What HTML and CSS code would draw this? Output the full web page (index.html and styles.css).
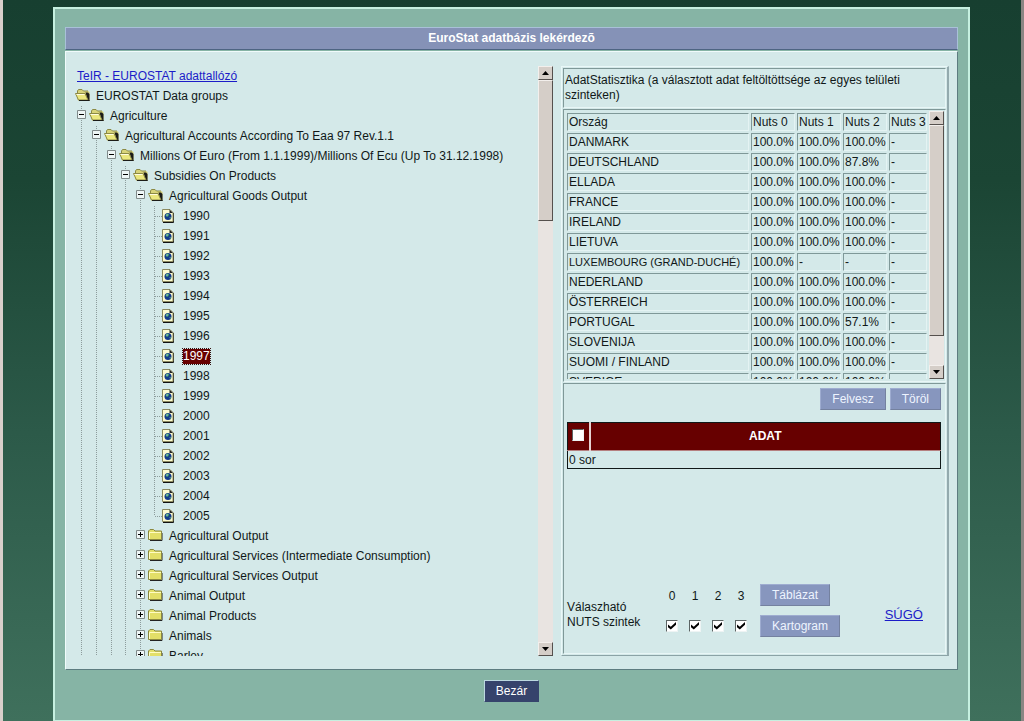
FILE: index.html
```html
<!DOCTYPE html>
<html lang="hu">
<head>
<meta charset="utf-8">
<title>EuroStat adatbázis lekérdezõ</title>
<link rel="stylesheet" href="styles.css">
</head>
<body>
<svg class="sprite" aria-hidden="true">
  <symbol id="open" viewBox="0 0 15 12">
    <path d="M2 10V2l1.500-1.500h3.500L8.500 2H13l1.500 1v9H4z" fill="#d8d47a"/>
    <path d="M2.500 4V2l1-1.500h3.500L8.500 2H13" fill="none" stroke="#8b8945"/>
    <path d="M10.500 3.500H13L14.500 5v7H13z" fill="#1c1c18"/>
    <path d="M.500 4.500H10L13 11H3.500z" fill="#ece87e" stroke="#8b8945"/>
    <path d="M1.500 5.500h8" stroke="#fffde0"/>
    <path d="M4 11.500h10.500" stroke="#1c1c18"/>
  </symbol>
  <symbol id="closed" viewBox="0 0 15 12">
    <path d="M2 11.500h12V4" fill="none" stroke="#222"/>
    <path d="M.500 10.500V2L2 .500h3.500L7 2h6.500v8.500z" fill="#e3df68" stroke="#8a883f"/>
    <path d="M1.500 10V3.500H13" fill="none" stroke="#fffcc4"/>
  </symbol>
  <symbol id="doc" viewBox="0 0 12 14">
    <path d="M1 13.500h10.500V4" fill="none" stroke="#111"/>
    <path d="M.500 12.500V.500h7.500l3 3v9z" fill="#fdfbd0" stroke="#8c8a60"/>
    <path d="M7.500.500v3.500h3.500z" fill="#222"/>
    <circle cx="6" cy="7.500" r="3.500" fill="#123a8c"/>
    <path d="M3.500 6.500l1.500-2 2 .5-.5 2-1.500 1zM7 8.500l2-.5-.5 2z" fill="#4ea66b"/>
    <path d="M4.500 5.500h1v1h-1z" fill="#d6efff"/>
  </symbol>
  <symbol id="minus" viewBox="0 0 9 9"><path d="M.500.500h8v8h-8z" fill="#eef6f6" stroke="#808a8a"/><path d="M2 4.500h5" stroke="#000"/></symbol>
  <symbol id="plus" viewBox="0 0 9 9"><path d="M.500.500h8v8h-8z" fill="#eef6f6" stroke="#808a8a"/><path d="M2 4.500h5M4.500 2v5" stroke="#000"/></symbol>
  <symbol id="up" viewBox="0 0 7 4"><path d="M0 4L3.500 0 7 4z"/></symbol>
  <symbol id="down" viewBox="0 0 7 4"><path d="M0 0h7L3.500 4z"/></symbol>
</svg>

<div class="window">
  <h1 class="title">EuroStat adatbázis lekérdezõ</h1>
  <main class="panel">
    <nav class="tree-pane">
      <div class="tree">
        <a class="tree-link" href="#">TeIR - EUROSTAT adattallózó</a>
        <div class="row"><svg class="folder"><use href="#open"/></svg>EUROSTAT Data groups</div>
        <ul class="branch root">
          <li>
            <div class="row"><svg class="toggle"><use href="#minus"/></svg><svg class="folder"><use href="#open"/></svg>Agriculture</div>
            <ul class="branch">
              <li>
                <div class="row"><svg class="toggle"><use href="#minus"/></svg><svg class="folder"><use href="#open"/></svg>Agricultural Accounts According To Eaa 97 Rev.1.1</div>
                <ul class="branch">
                  <li>
                    <div class="row"><svg class="toggle"><use href="#minus"/></svg><svg class="folder"><use href="#open"/></svg>Millions Of Euro (From 1.1.1999)/Millions Of Ecu (Up To 31.12.1998)</div>
                    <ul class="branch tight">
                      <li>
                        <div class="row"><svg class="toggle"><use href="#minus"/></svg><svg class="folder"><use href="#open"/></svg>Subsidies On Products</div>
                        <ul class="branch">
                          <li>
                            <div class="row"><svg class="toggle"><use href="#minus"/></svg><svg class="folder"><use href="#open"/></svg>Agricultural Goods Output</div>
                            <ul class="branch tight leaves">
                              <li class="row"><svg class="doc"><use href="#doc"/></svg>1990</li>
                              <li class="row"><svg class="doc"><use href="#doc"/></svg>1991</li>
                              <li class="row"><svg class="doc"><use href="#doc"/></svg>1992</li>
                              <li class="row"><svg class="doc"><use href="#doc"/></svg>1993</li>
                              <li class="row"><svg class="doc"><use href="#doc"/></svg>1994</li>
                              <li class="row"><svg class="doc"><use href="#doc"/></svg>1995</li>
                              <li class="row"><svg class="doc"><use href="#doc"/></svg>1996</li>
                              <li class="row"><svg class="doc"><use href="#doc"/></svg><span class="selected">1997</span></li>
                              <li class="row"><svg class="doc"><use href="#doc"/></svg>1998</li>
                              <li class="row"><svg class="doc"><use href="#doc"/></svg>1999</li>
                              <li class="row"><svg class="doc"><use href="#doc"/></svg>2000</li>
                              <li class="row"><svg class="doc"><use href="#doc"/></svg>2001</li>
                              <li class="row"><svg class="doc"><use href="#doc"/></svg>2002</li>
                              <li class="row"><svg class="doc"><use href="#doc"/></svg>2003</li>
                              <li class="row"><svg class="doc"><use href="#doc"/></svg>2004</li>
                              <li class="row"><svg class="doc"><use href="#doc"/></svg>2005</li>
                            </ul>
                          </li>
                          <li class="row"><svg class="toggle"><use href="#plus"/></svg><svg class="folder"><use href="#closed"/></svg>Agricultural Output</li>
                          <li class="row"><svg class="toggle"><use href="#plus"/></svg><svg class="folder"><use href="#closed"/></svg>Agricultural Services (Intermediate Consumption)</li>
                          <li class="row"><svg class="toggle"><use href="#plus"/></svg><svg class="folder"><use href="#closed"/></svg>Agricultural Services Output</li>
                          <li class="row"><svg class="toggle"><use href="#plus"/></svg><svg class="folder"><use href="#closed"/></svg>Animal Output</li>
                          <li class="row"><svg class="toggle"><use href="#plus"/></svg><svg class="folder"><use href="#closed"/></svg>Animal Products</li>
                          <li class="row"><svg class="toggle"><use href="#plus"/></svg><svg class="folder"><use href="#closed"/></svg>Animals</li>
                          <li class="row"><svg class="toggle"><use href="#plus"/></svg><svg class="folder"><use href="#closed"/></svg>Barley</li>
                        </ul>
                      </li>
                    </ul>
                  </li>
                </ul>
              </li>
            </ul>
          </li>
        </ul>
      </div>
      <div class="scrollbar tree-scroll">
        <button class="arrow" aria-label="Fel"><svg><use href="#up"/></svg></button>
        <div class="thumb"></div>
        <button class="arrow" aria-label="Le"><svg><use href="#down"/></svg></button>
      </div>
    </nav>

    <section class="side">
      <p class="cell intro">AdatStatisztika (a választott adat feltöltöttsége az egyes telületi szinteken)</p>
      <div class="cell stats">
        <div class="stats-view">
          <table class="stats-table">
            <thead><tr><th>Ország</th><th>Nuts 0</th><th>Nuts 1</th><th>Nuts 2</th><th>Nuts 3</th></tr></thead>
            <tbody>
              <tr><td>DANMARK</td><td>100.0%</td><td>100.0%</td><td>100.0%</td><td>-</td></tr>
              <tr><td>DEUTSCHLAND</td><td>100.0%</td><td>100.0%</td><td>87.8%</td><td>-</td></tr>
              <tr><td>ELLADA</td><td>100.0%</td><td>100.0%</td><td>100.0%</td><td>-</td></tr>
              <tr><td>FRANCE</td><td>100.0%</td><td>100.0%</td><td>100.0%</td><td>-</td></tr>
              <tr><td>IRELAND</td><td>100.0%</td><td>100.0%</td><td>100.0%</td><td>-</td></tr>
              <tr><td>LIETUVA</td><td>100.0%</td><td>100.0%</td><td>100.0%</td><td>-</td></tr>
              <tr><td class="long">LUXEMBOURG (GRAND-DUCHÉ)</td><td>100.0%</td><td>-</td><td>-</td><td>-</td></tr>
              <tr><td>NEDERLAND</td><td>100.0%</td><td>100.0%</td><td>100.0%</td><td>-</td></tr>
              <tr><td>ÖSTERREICH</td><td>100.0%</td><td>100.0%</td><td>100.0%</td><td>-</td></tr>
              <tr><td>PORTUGAL</td><td>100.0%</td><td>100.0%</td><td>57.1%</td><td>-</td></tr>
              <tr><td>SLOVENIJA</td><td>100.0%</td><td>100.0%</td><td>100.0%</td><td>-</td></tr>
              <tr><td>SUOMI / FINLAND</td><td>100.0%</td><td>100.0%</td><td>100.0%</td><td>-</td></tr>
              <tr><td>SVERIGE</td><td>100.0%</td><td>100.0%</td><td>100.0%</td><td>-</td></tr>
            </tbody>
          </table>
        </div>
        <div class="scrollbar stats-scroll">
          <button class="arrow" aria-label="Fel"><svg><use href="#up"/></svg></button>
          <div class="thumb"></div>
          <button class="arrow" aria-label="Le"><svg><use href="#down"/></svg></button>
        </div>
      </div>
      <div class="cell work">
        <div class="actions">
          <button class="btn">Felvesz</button>
          <button class="btn">Töröl</button>
        </div>
        <table class="picked">
          <thead><tr><th class="pick"><input class="check" type="checkbox" aria-label="Mind"></th><th>ADAT</th></tr></thead>
          <tbody><tr><td colspan="2">0 sor</td></tr></tbody>
        </table>
        <div class="query">
          <div class="query-label">Válaszható<br>NUTS szintek</div>
          <div class="levels">
            <label>0<input class="check" type="checkbox" checked></label>
            <label>1<input class="check" type="checkbox" checked></label>
            <label>2<input class="check" type="checkbox" checked></label>
            <label>3<input class="check" type="checkbox" checked></label>
          </div>
          <div class="outputs">
            <button class="btn">Táblázat</button>
            <button class="btn">Kartogram</button>
          </div>
          <a class="help" href="#">SÚGÓ</a>
        </div>
      </div>
    </section>
  </main>
  <footer class="footer"><button class="btn close">Bezár</button></footer>
</div>
</body>
</html>
```

FILE: styles.css
```css
* { box-sizing: border-box; }

body {
  margin: 0;
  height: 100vh;
  display: flex;
  padding: 7px 51px 0 50px;
  border-left: 3px solid #d9cfcb;
  border-right: 3px solid #8a8683;
  background: linear-gradient(#173f30, #1b4534 25%, #2c5a49 60%, #3f705c);
  font: 12px/15px "Liberation Sans", Arial, sans-serif;
  color: #101818;
}

.sprite { position: absolute; width: 0; height: 0; }
svg { display: block; flex: none; }
button, input { font: inherit; margin: 0; }
a { color: #1c1cc8; }

.window {
  flex: 1;
  min-width: 0;
  display: flex;
  flex-direction: column;
  padding: 18px 10px 0;
  border: 2px solid #c6f0e0;
  border-bottom-width: 1px;
  background: #86b4a5;
}

.title {
  margin: 0;
  height: 23px;
  border: 1px solid #a9c0d8;
  border-bottom-color: #4d6482;
  background: #8592b7;
  color: #fff;
  font-size: 12px;
  line-height: 21px;
  text-align: center;
}

.panel {
  flex: 1;
  min-height: 0;
  display: flex;
  gap: 8px;
  margin-top: 1px;
  padding: 14px 8px 13px 9px;
  border: 1px solid #f0fbfb;
  border-right-color: #5d7c80;
  border-bottom-color: #5d7c80;
  background: #d4e9e9;
}

/* Tree */
.tree-pane { flex: 1; min-width: 0; display: flex; }
.tree { flex: 1; min-width: 0; overflow: hidden; line-height: 20px; white-space: nowrap; }
.tree-link { display: block; width: max-content; margin-left: 2px; }
.row { display: flex; align-items: center; height: 20px; }
.branch {
  margin: 0 0 0 15px;
  padding: 0;
  list-style: none;
  background: repeating-linear-gradient(#8d9c9c 0 1px, transparent 1px 2px) 4px 0 / 1px 100% no-repeat;
}
.branch.root { margin-left: 2px; }
.branch.tight { margin-left: 14px; }
.branch.leaves { background-size: 1px calc(100% - 10px); }
.toggle { width: 9px; height: 9px; margin: 0 3px 3px 0; }
.folder { width: 15px; height: 12px; margin: 0 6px 2px 0; }
.doc { width: 12px; height: 14px; margin-right: 9px; }
.leaves .row { padding-left: 5px; }
.leaves .row::before {
  content: "";
  width: 7px;
  height: 1px;
  background: repeating-linear-gradient(90deg, #8d9c9c 0 1px, transparent 1px 2px);
}
.selected { line-height: 15px; background: #670000; color: #fff; outline: 1px dotted #301010; }

/* Scrollbars */
.scrollbar {
  flex: none;
  width: 15px;
  display: flex;
  flex-direction: column;
  background: #e9e4e1;
}
.arrow, .thumb {
  flex: none;
  border: 1px solid;
  border-color: #f3efec #55504d #55504d #f3efec;
  background: #d5cec8;
}
.arrow {
  display: grid;
  place-items: center;
  width: 15px;
  height: 14px;
  padding: 0;
}
.arrow:last-child { margin-top: auto; }
.arrow svg { width: 7px; height: 4px; }
.tree-scroll .thumb { height: 141px; }
.stats-scroll .thumb { height: 211px; }

/* Right side */
.side {
  flex: none;
  width: 388px;
  display: flex;
  flex-direction: column;
  gap: 1px;
  padding: 1px;
  border: 1px solid #eaf8f8;
  border-right: 2px solid #93aaae;
  border-bottom: 1px solid #8ba3a6;
}
.cell {
  margin: 0;
  border: 1px solid;
  border-color: #7f9898 #e8f6f6 #e8f6f6 #7f9898;
}
.intro { height: 40px; padding: 4px 40px 4px 1px; }
.stats { flex: none; height: 273px; display: flex; padding: 1px 1px 2px 1px; }
.stats-view { flex: 1; min-width: 0; overflow: hidden; }
.stats-table { width: 100%; border-spacing: 2px; table-layout: fixed; white-space: nowrap; }
.stats-table th, .stats-table td {
  width: 44px;
  height: 18px;
  padding: 1px 0 0 1px;
  border: 1px solid;
  border-color: #7f9898 #e4f3f3 #e4f3f3 #7f9898;
  font-weight: normal;
  text-align: left;
}
.stats-table th:first-child { width: auto; }
.stats-table th:last-child { width: 38px; }
.stats-table .long { font-size: 11px; }

.work { flex: 1; min-height: 0; display: flex; flex-direction: column; padding: 4px 4px 16px 3px; }
.btn {
  height: 22px;
  padding: 0 11px;
  border: 1px solid;
  border-color: #9eacd0 #74819f #74819f #9eacd0;
  background: #8796be;
  color: #eef4ff;
}
.actions { display: flex; justify-content: flex-end; gap: 4px; }

.picked {
  width: 100%;
  margin-top: 12px;
  border: 1px solid #101818;
  border-collapse: collapse;
}
.picked th { height: 28px; padding: 0; background: #670000; color: #fff; border-bottom: 1px solid #b58080; }
.picked .pick { width: 22px; padding: 0; border-right: 2px solid #e6d2d2; }
.picked .pick .check { margin: 0 auto 4px; }
.picked td { height: 18px; padding: 1px 1px 0; }

.check {
  appearance: none;
  display: block;
  width: 12px;
  height: 12px;
  border: 1px solid;
  border-color: #5b6464 #eef4f4 #eef4f4 #5b6464;
  background: #fff;
}
.check:checked::before {
  content: "";
  display: block;
  width: 8px;
  height: 8px;
  margin: 1px;
  background: #000;
  clip-path: polygon(0 30%, 35% 60%, 100% 0, 100% 35%, 35% 95%, 0 65%);
}

.query { display: flex; align-items: center; margin-top: auto; }
.query-label { width: 99px; padding-top: 8px; }
.levels { display: flex; gap: 11px; width: 94px; }
.levels label { display: flex; flex-direction: column; align-items: center; gap: 16px; }
.outputs { display: flex; flex-direction: column; align-items: flex-start; gap: 9px; flex: 1; }
.help { margin-right: 18px; padding-top: 8px; font-size: 13px; }

.footer { display: flex; justify-content: center; padding: 10px 0 18px; }
.close { background: #36436c; border-color: #bcd8e0 #36436c #36436c #bcd8e0; color: #fff; }
```
